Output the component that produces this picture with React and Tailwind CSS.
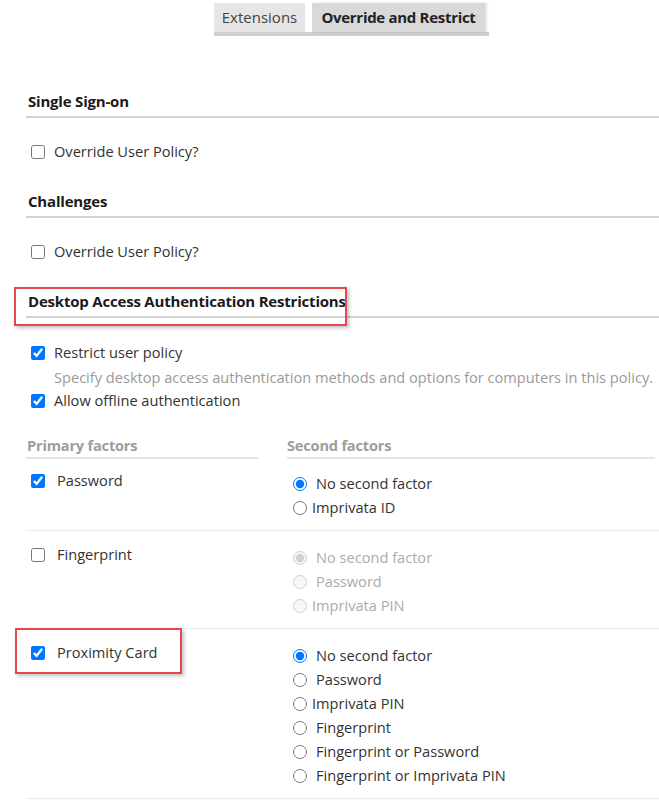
import React from "react";

const Heading = ({ children }) => (
  <h3 className="pl-[2px] pb-[5px] text-[15px] leading-[20px] font-bold tracking-[-0.2px] text-[#1a1a1a] border-b-2 border-[#d2d2d2]">
    {children}
  </h3>
);

const CheckRow = ({ label, checked, className = "" }) => (
  <label className={`flex items-center h-[24px] ${className}`}>
    <input type="checkbox" defaultChecked={checked} className="ml-[5px] w-[14px] h-[14px] accent-[#0075ff]" />
    <span className="ml-[9px]">{label}</span>
  </label>
);

const Radio = ({ name, label, checked, disabled, tight }) => (
  <label className={`flex items-center h-[24px] ${disabled ? "text-[#ababab]" : ""}`}>
    <input
      type="radio"
      name={name}
      defaultChecked={checked}
      disabled={disabled}
      className="ml-[6px] w-[14px] h-[14px] accent-[#0075ff]"
    />
    <span className={tight ? "ml-[5px]" : "ml-[9px]"}>{label}</span>
  </label>
);

const RedBox = ({ className }) => (
  <div
    className={`absolute border-2 border-[#e5484d] shadow-[2px_2px_4px_rgba(0,0,0,0.25)] pointer-events-none ${className}`}
  />
);

const factors = [
  {
    name: "Password",
    checked: true,
    pt: "pt-[12px]",
    options: [
      { label: "No second factor", checked: true },
      { label: "Imprivata ID", tight: true },
    ],
  },
  {
    name: "Fingerprint",
    checked: false,
    disabled: true,
    pt: "pt-[14px]",
    options: [
      { label: "No second factor", checked: true },
      { label: "Password" },
      { label: "Imprivata PIN", tight: true },
    ],
  },
  {
    name: "Proximity Card",
    checked: true,
    pt: "pt-[14px]",
    highlight: true,
    options: [
      { label: "No second factor", checked: true },
      { label: "Password" },
      { label: "Imprivata PIN", tight: true },
      { label: "Fingerprint" },
      { label: "Fingerprint or Password" },
      { label: "Fingerprint or Imprivata PIN" },
    ],
  },
];

export default function App() {
  return (
    <div className="w-[659px] min-h-[800px] bg-white font-['Open_Sans',sans-serif] text-[14.6px] text-[#333]">
      {/* tabs */}
      <div className="pt-[3px] pl-[214px]">
        <div className="w-[275px]">
          <div className="flex items-end gap-[7px]">
            <div className="h-[29px] w-[91px] flex items-center justify-center bg-[#e6e6e6] text-[15px] text-[#444]">
              Extensions
            </div>
            <div className="h-[29px] w-[173px] flex items-center justify-center bg-[#d9d9d9] text-[15px] font-bold tracking-[-0.3px] text-[#222] shadow-[2px_0_2px_rgba(0,0,0,0.12)]">
              Override and Restrict
            </div>
          </div>
          <div className="h-[4px] bg-[#cfcfcf]" />
        </div>
      </div>

      <div className="pl-[26px]">
        <div className="mt-[55px]">
          <Heading>Single Sign-on</Heading>
          <CheckRow label="Override User Policy?" className="mt-[22px]" />
        </div>

        <div className="mt-[27px]">
          <Heading>Challenges</Heading>
          <CheckRow label="Override User Policy?" className="mt-[22px]" />
        </div>

        <div className="mt-[27px]">
          <div className="relative">
            <Heading>Desktop Access Authentication Restrictions</Heading>
            <RedBox className="left-[-12px] top-[-4px] w-[333px] h-[39px]" />
          </div>
          <CheckRow label="Restrict user policy" checked className="mt-[23px]" />
          <p className="pl-[28px] leading-[24px] text-[#9a9a9a]">
            Specify desktop access authentication methods and options for computers in this policy.
          </p>
          <CheckRow label="Allow offline authentication" checked />
        </div>

        <div className="mt-[22px] grid grid-cols-[233px_1fr] gap-x-[28px] pr-[4px]">
          <div className="pl-[1px] pb-[2px] leading-[20px] font-bold tracking-[-0.2px] text-[#9d9d9d] border-b-2 border-[#e6e6e6]">
            Primary factors
          </div>
          <div className="pb-[2px] leading-[20px] font-bold tracking-[-0.2px] text-[#9d9d9d] border-b-2 border-[#e6e6e6]">
            Second factors
          </div>
        </div>

        {factors.map((f) => (
          <div key={f.name} className={`border-b border-[#e8ebf2] ${f.pt} pb-[10px]`}>
            <div className="grid grid-cols-[233px_1fr] gap-x-[28px]">
              <div className="relative">
                <label className="flex items-center h-[20px]">
                  <input type="checkbox" defaultChecked={f.checked} className="ml-[5px] w-[14px] h-[14px] accent-[#0075ff]" />
                  <span className="ml-[12px]">{f.name}</span>
                </label>
                {f.highlight && <RedBox className="left-[-11px] top-[-15px] w-[167px] h-[46px]" />}
              </div>
              <div className="pt-[1px]">
                {f.options.map((o) => (
                  <Radio
                    key={o.label}
                    name={f.name}
                    label={o.label}
                    checked={o.checked}
                    tight={o.tight}
                    disabled={f.disabled}
                  />
                ))}
              </div>
            </div>
          </div>
        ))}
      </div>
    </div>
  );
}
